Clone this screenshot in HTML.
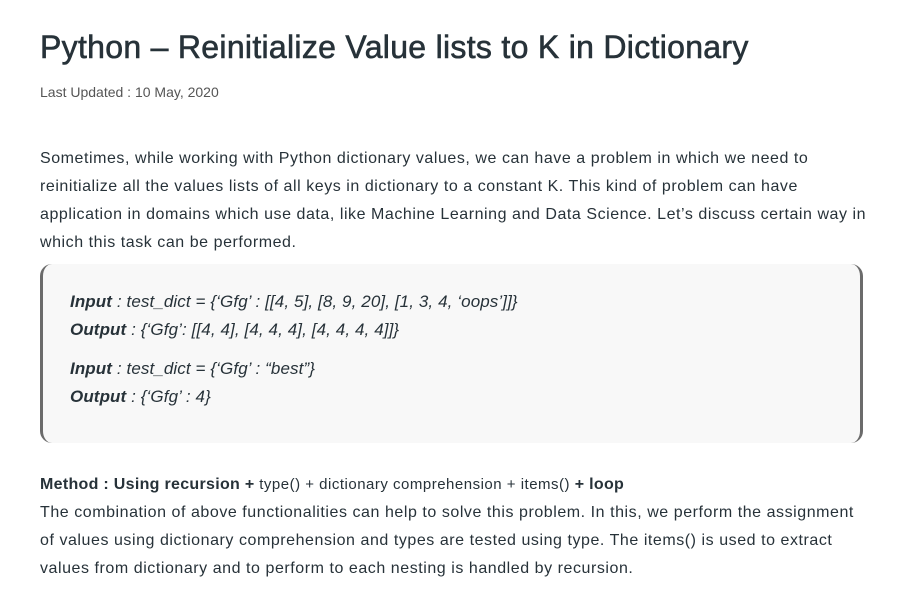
<!DOCTYPE html>
<html><head><meta charset="utf-8"><style>
body{margin:0;background:#fff;width:922px;height:595px;overflow:hidden;font-family:"Liberation Sans",sans-serif;color:#273239}
h1{position:absolute;left:40px;top:29px;margin:0;font-size:32px;font-weight:normal;letter-spacing:0.3px;color:#273239;-webkit-text-stroke:0.6px #273239}
.date{position:absolute;left:40px;top:84px;font-size:14px;color:#555}
.p{position:absolute;left:40px;width:830px;font-size:16px;line-height:28px;color:#273239;letter-spacing:0.55px}
.box{position:absolute;left:40px;top:264px;width:817px;height:179px;background:#f8f8f8;border-left:3px solid #6b6b6b;border-right:3px solid #6b6b6b;border-radius:12px}
.box div{position:absolute;left:27px;font-style:italic;font-size:17px;color:#273239;letter-spacing:0.1px}
.box b{font-weight:bold}
</style></head><body>
<h1>Python – Reinitialize Value lists to K in Dictionary</h1>
<div class="date">Last Updated : 10 May, 2020</div>
<div class="p" style="top:145px">Sometimes, while working with Python dictionary values, we can have a problem in which we need to reinitialize all the values lists of all keys in dictionary to a constant K. This kind of problem can have application in domains which use data, like Machine Learning and Data Science. Let’s discuss certain way in which this task can be performed.</div>
<div class="box">
<div style="top:28px"><b>Input</b> : test_dict = {‘Gfg’ : [[4, 5], [8, 9, 20], [1, 3, 4, ‘oops’]]}</div>
<div style="top:56px"><b>Output</b> : {‘Gfg’: [[4, 4], [4, 4, 4], [4, 4, 4, 4]]}</div>
<div style="top:95px"><b>Input</b> : test_dict = {‘Gfg’ : “best”}</div>
<div style="top:123px"><b>Output</b> : {‘Gfg’ : 4}</div>
</div>
<div class="p" style="top:471px"><b style="letter-spacing:0.3px">Method : Using recursion + </b><span style="font-size:15px;letter-spacing:0.5px">type() + dictionary comprehension + items()</span><b style="letter-spacing:0.3px"> + loop</b><br>The combination of above functionalities can help to solve this problem. In this, we perform the assignment of values using dictionary comprehension and types are tested using type. The items() is used to extract values from dictionary and to perform to each nesting is handled by recursion.</div>
</body></html>
